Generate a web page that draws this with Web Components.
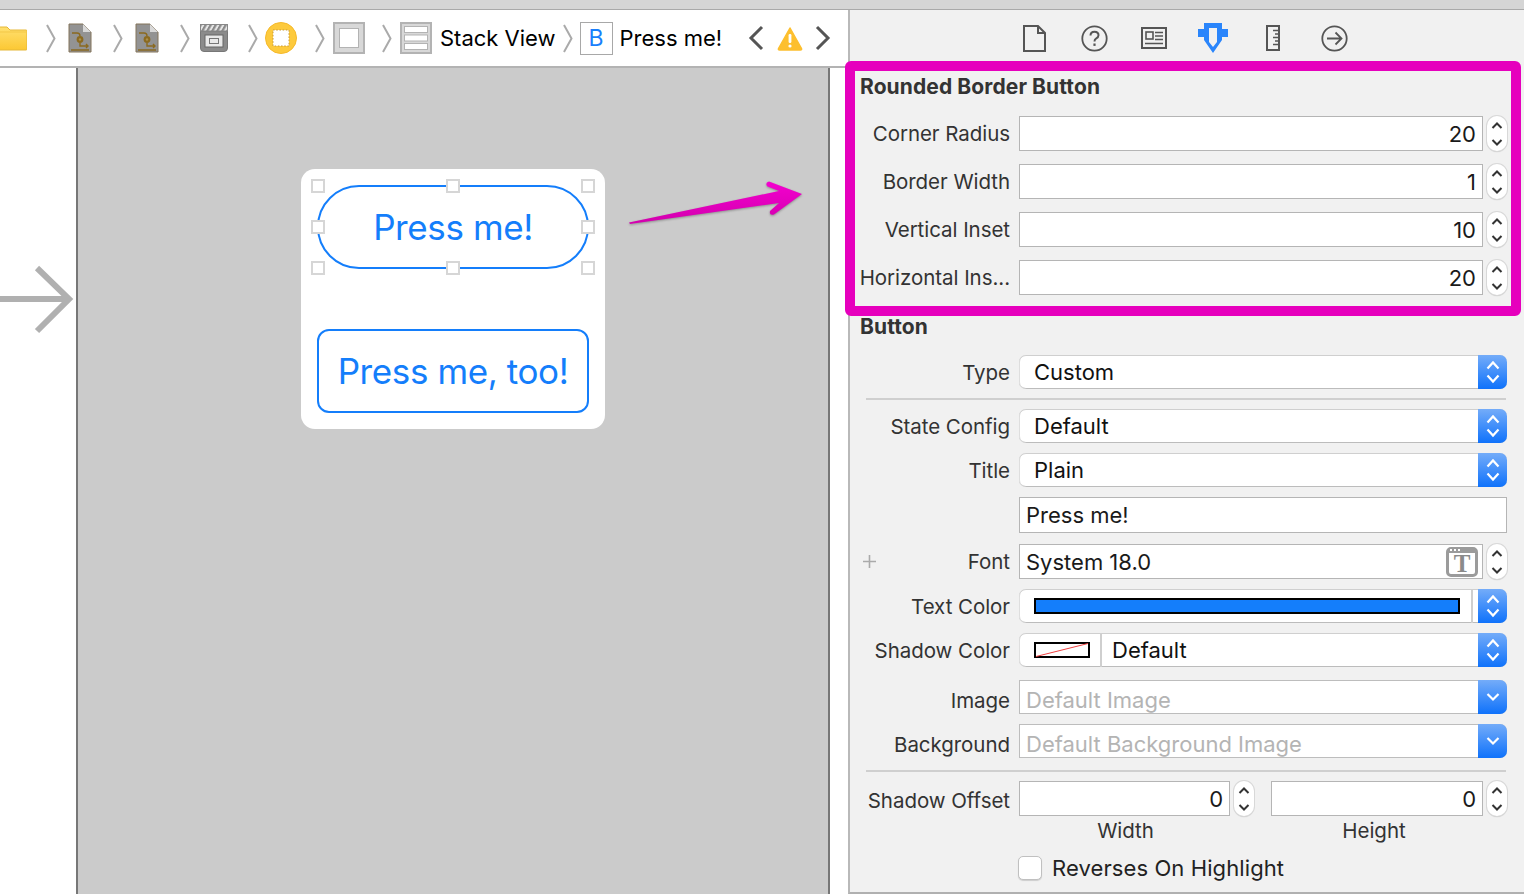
<!DOCTYPE html>
<html lang="en">
<head>
<meta charset="utf-8">
<title>Rounded Border Button</title>
<style>
    html, body { margin: 0; height: 100%; overflow: hidden; background: #f1f1f1; }
    body { font-family: Inter, "Liberation Sans", sans-serif; }
</style>
</head>
<body>
<xc-app>
    <jump-bar slot="left"></jump-bar>
    <design-canvas slot="left">
        <outlet-button radius="42" selected>Press me!</outlet-button>
        <outlet-button radius="12">Press me, too!</outlet-button>
    </design-canvas>

    <inspector-tabs slot="right"></inspector-tabs>
    <inspector-section slot="right" title="Rounded Border Button" style="--head-top:10px">
        <insp-row label="Corner Radius" style="margin-top:13px"><num-field value="20"></num-field></insp-row>
        <insp-row label="Border Width" style="margin-top:13px"><num-field value="1"></num-field></insp-row>
        <insp-row label="Vertical Inset" style="margin-top:13px"><num-field value="10"></num-field></insp-row>
        <insp-row label="Horizontal Ins..." style="margin-top:13px"><num-field value="20"></num-field></insp-row>
    </inspector-section>
    <inspector-section slot="right" title="Button" style="--head-top:16px">
        <insp-row label="Type" style="margin-top:12px"><pop-up text="Custom"></pop-up></insp-row>
        <insp-sep style="margin-top:9px"></insp-sep>
        <insp-row label="State Config" style="margin-top:9px"><pop-up text="Default"></pop-up></insp-row>
        <insp-row label="Title" style="margin-top:10px"><pop-up text="Plain"></pop-up></insp-row>
        <insp-row style="margin-top:10px"><text-field text="Press me!"></text-field></insp-row>
        <insp-row label="Font" plus style="margin-top:11px"><font-field text="System 18.0"></font-field></insp-row>
        <insp-row label="Text Color" style="margin-top:10px"><color-pop kind="wide"></color-pop></insp-row>
        <insp-row label="Shadow Color" style="margin-top:10px"><color-pop kind="clear" text="Default"></color-pop></insp-row>
        <insp-row label="Image" style="margin-top:13px;--label-lh:42px"><combo-box text="Default Image"></combo-box></insp-row>
        <insp-row label="Background" style="margin-top:10px;--label-lh:42px"><combo-box text="Default Background Image"></combo-box></insp-row>
        <insp-sep style="margin-top:12px"></insp-sep>
        <insp-row label="Shadow Offset" style="margin-top:9px;--label-lh:40px"><offset-pair></offset-pair></insp-row>
        <insp-row style="margin-top:12px"><check-box text="Reverses On Highlight"></check-box></insp-row>
    </inspector-section>

    <call-outs slot="over"></call-outs>
</xc-app>

<script>
class XcApp extends HTMLElement {
    constructor() {
        super();
        this.attachShadow({ mode: 'open' });
        this.shadowRoot.innerHTML = `
            <style>
                :host { display: flex; flex-direction: column; position: relative; width: 1524px; height: 894px; overflow: hidden; background: #f1f1f1; }
                .strip { flex: none; height: 9px; background: #d5d5d5; border-bottom: 1px solid #a9a9a9; }
                .main { flex: 1; display: flex; min-height: 0; }
                .left { flex: none; width: 848px; display: flex; flex-direction: column; background: #fff; }
                .right { flex: 1; border-left: 2px solid #b9b9b9; border-bottom: 2px solid #b0b0b0; background: #f1f1f1; min-width: 0; }
            </style>
            <div class="strip"></div>
            <div class="main">
                <div class="left"><slot name="left"></slot></div>
                <div class="right"><slot name="right"></slot></div>
            </div>
            <slot name="over"></slot>
        `;
    }
}

class JumpBar extends HTMLElement {
    constructor() {
        super();
        this.attachShadow({ mode: 'open' });
        const sep = ml => `<svg class="sep" style="margin-left:${ml}px" width="10" height="29" viewBox="0 0 10 29"><path d="M1 1 L8.5 14.5 L1 28" fill="none" stroke="#aaa" stroke-width="2"/></svg>`;
        const doc = ml => `<svg style="margin-left:${ml}px" width="24" height="30" viewBox="0 0 24 30">
            <path d="M1 1 H15 L23 9 V29 H1 Z" fill="#939393" stroke="#84745a" stroke-width="1"/>
            <path d="M15 1 V9 H23 Z" fill="#d8d8d8"/>
            <path d="M4 10 H9 Q12 10 12 13" fill="none" stroke="#8b6a20" stroke-width="1.4"/>
            <circle cx="12" cy="16.5" r="3.4" fill="#8b6a20"/><circle cx="12" cy="16.5" r="1.2" fill="#a98f4e"/>
            <path d="M12 20 V23 H20 M18 21 L20 23 L18 25 M3 27 H21" fill="none" stroke="#8b6a20" stroke-width="1.4"/>
        </svg>`;
        this.shadowRoot.innerHTML = `
            <style>
                :host { flex: none; display: flex; align-items: center; height: 56px; box-sizing: content-box; background: #fff; border-bottom: 2px solid #b3b3b3; font: 22px Inter, "Liberation Sans", sans-serif; color: #000; overflow: hidden; }
                svg { flex: none; display: block; }
                .txt { flex: none; white-space: nowrap; }
                .b { flex: none; box-sizing: border-box; width: 33px; height: 33px; margin-left: 7px; border: 1px solid #a8a8a8; display: flex; align-items: center; justify-content: center; color: #1a7ffb; font-size: 23px; }
            </style>
            <svg style="margin-left:-1px" width="28" height="25" viewBox="0 0 28 25">
                <defs><linearGradient id="fo" x1="0" y1="0" x2="0" y2="1"><stop offset="0" stop-color="#ffe070"/><stop offset="1" stop-color="#fcc833"/></linearGradient></defs>
                <path d="M0 1 H8 L11 4 H27 Q28 4 28 5 V23 Q28 24 27 24 H0 Z" fill="url(#fo)" stroke="#e6b838" stroke-width="1"/>
                <path d="M0 6 H28" stroke="#f3c746" stroke-width="1"/>
            </svg>
            ${sep(19)}${doc(12)}${sep(21)}${doc(12)}${sep(21)}
            <svg style="margin-left:10px" width="28" height="28" viewBox="0 0 28 28">
                <defs><pattern id="ha" width="5" height="7" patternUnits="userSpaceOnUse" patternTransform="skewX(-30)"><rect width="5" height="7" fill="#e6e6e6"/><rect width="2.6" height="7" fill="#8a8a8a"/></pattern></defs>
                <path d="M0.5 7 H27.5 V24 Q27.5 27.5 24 27.5 H4 Q0.5 27.5 0.5 24 Z" fill="#8b8b8b" stroke="#777"/>
                <rect x="0.5" y="0.5" width="27" height="6.5" fill="url(#ha)" stroke="#888"/>
                <rect x="5" y="11" width="18" height="12" fill="#e9e9e9" stroke="#666"/>
                <rect x="9.5" y="14.5" width="9" height="5" fill="#e9e9e9" stroke="#777"/>
            </svg>
            ${sep(20)}
            <svg style="margin-left:7px" width="32" height="32" viewBox="0 0 32 32">
                <circle cx="16" cy="16" r="15.5" fill="#fdca3d" stroke="#f5b92c"/>
                <rect x="8" y="8" width="16" height="16" fill="#fff" stroke="#c99a34" stroke-dasharray="1.6 1.6"/>
            </svg>
            ${sep(18)}
            <svg style="margin-left:8px" width="32" height="32" viewBox="0 0 32 32">
                <rect x="1" y="1" width="30" height="30" fill="#d8d8d8" stroke="#b3b3b3" stroke-width="2"/>
                <rect x="6.5" y="6.5" width="19" height="19" fill="#fff" stroke="#b3b3b3"/>
            </svg>
            ${sep(17)}
            <svg style="margin-left:8px" width="32" height="32" viewBox="0 0 32 32">
                <rect x="1" y="1" width="30" height="30" fill="#d8d8d8" stroke="#b3b3b3" stroke-width="2"/>
                <rect x="4.5" y="4.5" width="23" height="6" fill="#fff" stroke="#b3b3b3"/>
                <rect x="4.5" y="13" width="23" height="6" fill="#fff" stroke="#b3b3b3"/>
                <rect x="4.5" y="21.5" width="23" height="6" fill="#fff" stroke="#b3b3b3"/>
            </svg>
            <span class="txt" style="margin-left:8px">Stack View</span>
            ${sep(7)}
            <span class="b">B</span>
            <span class="txt" style="margin-left:7px">Press me!</span>
            <svg style="margin-left:26px" width="16" height="26" viewBox="0 0 16 26"><path d="M14 2 L3 13 L14 24" fill="none" stroke="#555" stroke-width="3"/></svg>
            <svg style="margin-left:13px" width="26" height="25" viewBox="0 0 26 25">
                <path d="M13 2 L24.5 22.5 Q25 24 23.5 24 H2.5 Q1 24 1.5 22.5 Z" fill="#fdbf2e" stroke="#fdbf2e" stroke-width="1.5" stroke-linejoin="round"/>
                <rect x="11.6" y="8" width="2.8" height="9" rx="1.2" fill="#fff"/><circle cx="13" cy="20" r="1.6" fill="#fff"/>
            </svg>
            <svg style="margin-left:12px" width="16" height="26" viewBox="0 0 16 26"><path d="M2 2 L13 13 L2 24" fill="none" stroke="#555" stroke-width="3"/></svg>
        `;
    }
}

class DesignCanvas extends HTMLElement {
    constructor() {
        super();
        this.attachShadow({ mode: 'open' });
        this.shadowRoot.innerHTML = `
            <style>
                :host { flex: 1; display: flex; min-height: 0; background: #fff; }
                .gutter { flex: none; width: 76px; display: flex; align-items: flex-start; padding-top: 197px; box-sizing: border-box; }
                .board { flex: none; box-sizing: border-box; width: 754px; border-left: 2px solid #777; border-right: 2px solid #777; background: #cbcbcb; display: flex; justify-content: center; align-items: flex-start; padding-top: 101px; }
                .scene { width: 304px; height: 260px; box-sizing: border-box; padding: 16px; background: #fff; border-radius: 14px; display: flex; flex-direction: column; justify-content: space-between; }
            </style>
            <div class="gutter">
                <svg width="76" height="72" viewBox="0 0 76 72"><path d="M0 34 H68 M37 3 L69 34 L37 66" fill="none" stroke="#b0b0b0" stroke-width="6"/></svg>
            </div>
            <div class="board"><div class="scene"><slot></slot></div></div>
        `;
    }
}

class OutletButton extends HTMLElement {
    constructor() {
        super();
        this.attachShadow({ mode: 'open' });
        const spots = [[0,0],[50,0],[100,0],[0,50],[100,50],[0,100],[50,100],[100,100]];
        const filled = i => (i === 1 || i === 3 || i === 4 || i === 6) ? ' on' : '';
        const handles = this.hasAttribute('selected')
            ? '<div class="hs">' + spots.map((p, i) => `<i class="h${filled(i)}" style="left:${p[0]}%;top:${p[1]}%"></i>`).join('') + '</div>' : '';
        this.shadowRoot.innerHTML = `
            <style>
                :host { display: flex; position: relative; height: 84px; box-sizing: border-box; border: 2px solid #147efb; border-radius: ${this.getAttribute('radius')}px; align-items: center; justify-content: center; color: #147efb; font: 35px Inter, "Liberation Sans", sans-serif; letter-spacing: -0.4px; }
                .hs { position: absolute; inset: -1px; }
                .h { position: absolute; width: 14px; height: 14px; box-sizing: border-box; margin: -7px 0 0 -7px; border: 2px solid #d6d6d6; background: transparent; }
                .h.on { background: #fff; }
            </style>
            <slot></slot>${handles}
        `;
    }
}

class InspectorTabs extends HTMLElement {
    constructor() {
        super();
        this.attachShadow({ mode: 'open' });
        this.shadowRoot.innerHTML = `
            <style>
                :host { display: flex; align-items: center; height: 51px; padding-left: 173px; padding-top: 5px; box-sizing: border-box; }
                svg { flex: none; display: block; }
            </style>
            <svg style="margin-left:0" width="23" height="27" viewBox="0 0 23 27"><path d="M1 1 H15 L22 8 V26 H1 Z M15 1 V8 H22" fill="none" stroke="#555" stroke-width="2"/></svg>
            <svg style="margin-left:35px" width="27" height="27" viewBox="0 0 27 27"><circle cx="13.5" cy="13.5" r="12.2" fill="none" stroke="#555" stroke-width="1.8"/><path d="M9.5 10.5 Q9.5 6.8 13.5 6.8 Q17.5 6.8 17.5 10.3 Q17.5 12.4 15 13.6 Q13.5 14.4 13.5 16.5" fill="none" stroke="#555" stroke-width="2"/><rect x="12.4" y="18.5" width="2.2" height="2.4" fill="#555"/></svg>
            <svg style="margin-left:33px" width="26" height="22" viewBox="0 0 26 22"><rect x="1" y="1" width="24" height="20" fill="none" stroke="#555" stroke-width="2"/><rect x="5" y="5" width="7" height="7" fill="none" stroke="#555" stroke-width="1.6"/><path d="M14 5.5 H22 M14 9 H22 M14 12.5 H22 M4 16.5 H22" stroke="#555" stroke-width="1.6"/></svg>
            <svg style="margin-left:31px" width="30" height="30" viewBox="0 0 30 30"><path d="M6 0 H24 V6 H30 V14 H24 V17 L15 30 L6 17 V14 H0 V6 H6 Z M11 5 V19 L15 24 L19 19 V5 Z" fill="#2a85fb" fill-rule="evenodd"/></svg>
            <svg style="margin-left:38px" width="14" height="26" viewBox="0 0 14 26"><path d="M1 1 H13 V25 H1 Z" fill="none" stroke="#555" stroke-width="2"/><path d="M7 5.5 H13 M9 9 H13 M7 12.5 H13 M9 16 H13 M7 19.5 H13" stroke="#555" stroke-width="1.6"/></svg>
            <svg style="margin-left:41px" width="27" height="27" viewBox="0 0 27 27"><circle cx="13.5" cy="13.5" r="12.2" fill="none" stroke="#555" stroke-width="1.8"/><path d="M6 13.5 H20 M14.5 7.5 L20.5 13.5 L14.5 19.5" fill="none" stroke="#555" stroke-width="1.8"/></svg>
        `;
    }
}

class InspectorSection extends HTMLElement {
    constructor() {
        super();
        this.attachShadow({ mode: 'open' });
        this.shadowRoot.innerHTML = `
            <style>
                :host { display: block; }
                h2 { margin: var(--head-top) 0 0 10px; height: 32px; font: 700 21px/32px Inter, "Liberation Sans", sans-serif; letter-spacing: 0.1px; color: #333; }
            </style>
            <h2></h2>
            <slot></slot>
        `;
    }

    connectedCallback() {
        this.shadowRoot.querySelector('h2').innerText = this.getAttribute('title');
    }
}

class InspRow extends HTMLElement {
    constructor() {
        super();
        this.attachShadow({ mode: 'open' });
        this.shadowRoot.innerHTML = `
            <style>
                :host { display: flex; align-items: flex-start; position: relative; padding-right: 17px; }
                .label { flex: none; box-sizing: border-box; width: 160px; height: 24px; text-align: right; white-space: nowrap; font: 20.5px/var(--label-lh, 36px) Inter, "Liberation Sans", sans-serif; letter-spacing: -0.05px; color: #333; }
                .ctl { flex: 1; min-width: 0; margin-left: 9px; }
                .plus { position: absolute; left: 12px; top: 10px; width: 15px; height: 15px; }
            </style>
            <span class="label"></span>
            <div class="ctl"><slot></slot></div>
        `;
    }

    connectedCallback() {
        this.shadowRoot.querySelector('.label').innerText = this.getAttribute('label') || '';
        if (this.hasAttribute('plus')) {
            this.shadowRoot.querySelector('.label').insertAdjacentHTML('beforebegin',
                '<svg class="plus" viewBox="0 0 15 15"><path d="M7.5 1 V14 M1 7.5 H14" stroke="#aaa" stroke-width="1.6"/></svg>');
        }
    }
}

class InspSep extends HTMLElement {
    constructor() {
        super();
        this.attachShadow({ mode: 'open' });
        this.shadowRoot.innerHTML = `
            <style>:host { display: block; height: 2px; background: #cfcfcf; margin-left: 16px; margin-right: 18px; }</style>
        `;
    }
}

const stepperSvg = `<svg width="12" height="28" viewBox="0 0 12 28"><path d="M1.5 8 L6 3.5 L10.5 8 M1.5 20 L6 24.5 L10.5 20" fill="none" stroke="#333" stroke-width="2"/></svg>`;
const fieldCss = `
    :host { display: flex; }
    .f { flex: 1; min-width: 0; box-sizing: border-box; height: 35px; background: #fff; border: 1px solid #b5b5b5; display: flex; align-items: center; font: 22px Inter, "Liberation Sans", sans-serif; color: #1a1a1a; padding: 0 6px 0 6px; white-space: nowrap; overflow: hidden; }
    .st { flex: none; width: 20px; height: 35px; margin-left: 4px; box-sizing: border-box; background: #fff; border-radius: 10px; box-shadow: 0 0 0 1px #d8d8d8, 0 1px 1px rgba(0,0,0,.28); display: flex; align-items: center; justify-content: center; }
`;

class NumField extends HTMLElement {
    constructor() {
        super();
        this.attachShadow({ mode: 'open' });
        this.shadowRoot.innerHTML = `
            <style>${fieldCss} .f { justify-content: flex-end; }</style>
            <div class="f"><span class="v"></span></div>
            <div class="st">${stepperSvg}</div>
        `;
    }

    connectedCallback() {
        this.shadowRoot.querySelector('.v').innerText = this.getAttribute('value');
    }
}

const popCss = `
    :host { display: block; }
    .p { display: flex; height: 34px; border-radius: 7px; background: #fff; overflow: hidden; box-shadow: inset 0 1px 0 #cfcfcf, inset 1px 0 0 #dedede, inset 0 -1px 0 #bcbcbc; font: 22px Inter, "Liberation Sans", sans-serif; color: #111; }
    .body { flex: 1; min-width: 0; display: flex; align-items: center; white-space: nowrap; }
    .end { flex: none; width: 29px; background: linear-gradient(#74acf9, #0f72fb); display: flex; align-items: center; justify-content: center; }
`;
const upDown = `<svg width="14" height="26" viewBox="0 0 14 26"><path d="M1.5 9.5 L7 3.5 L12.5 9.5 M1.5 16.5 L7 22.5 L12.5 16.5" fill="none" stroke="#fff" stroke-width="2.2"/></svg>`;

class PopUp extends HTMLElement {
    constructor() {
        super();
        this.attachShadow({ mode: 'open' });
        this.shadowRoot.innerHTML = `
            <style>${popCss} .body { padding-left: 15px; }</style>
            <div class="p"><div class="body"></div><div class="end">${upDown}</div></div>
        `;
    }

    connectedCallback() {
        this.shadowRoot.querySelector('.body').innerText = this.getAttribute('text');
    }
}

class ColorPop extends HTMLElement {
    constructor() {
        super();
        this.attachShadow({ mode: 'open' });
        this.shadowRoot.innerHTML = `
            <style>${popCss}
                .body { padding-left: 15px; }
                .wide { flex: none; box-sizing: border-box; width: 426px; height: 16px; background: #147efb; border: 2px solid #000; }
                .bar { flex: none; width: 2px; align-self: stretch; background: #cfcfcf; margin-left: 11px; }
                .clear { flex: none; width: 56px; height: 16px; display: block; }
                .name { margin-left: 10px; }
                .clear + .bar { margin-left: 10px; }
            </style>
            <div class="p"><div class="body"></div><div class="end">${upDown}</div></div>
        `;
    }

    connectedCallback() {
        const body = this.shadowRoot.querySelector('.body');
        if (this.getAttribute('kind') === 'wide') {
            body.innerHTML = '<span class="wide"></span><span class="bar"></span>';
        } else {
            body.innerHTML = `<svg class="clear" viewBox="0 0 56 16"><rect x="1" y="1" width="54" height="14" fill="#fff" stroke="#000" stroke-width="2"/><path d="M2 14.5 L54 1.5" stroke="#f04040" stroke-width="1"/></svg><span class="bar"></span><span class="name"></span>`;
            body.querySelector('.name').innerText = this.getAttribute('text');
        }
    }
}

class TextField extends HTMLElement {
    constructor() {
        super();
        this.attachShadow({ mode: 'open' });
        this.shadowRoot.innerHTML = `
            <style>${fieldCss} .f { height: 36px; }</style>
            <div class="f"></div>
        `;
    }

    connectedCallback() {
        this.shadowRoot.querySelector('.f').innerText = this.getAttribute('text');
    }
}

class FontField extends HTMLElement {
    constructor() {
        super();
        this.attachShadow({ mode: 'open' });
        this.shadowRoot.innerHTML = `
            <style>${fieldCss}
                .f { justify-content: space-between; padding-right: 4px; }
                .t { flex: none; position: relative; box-sizing: border-box; width: 32px; height: 30px; border: 3px solid #9b9b9b; border-top-width: 6px; border-radius: 5px; background: #fff; display: flex; align-items: center; justify-content: center; font: 700 25px/1 "Liberation Serif", serif; color: #8a8a8a; }
                .t::before { content: ""; position: absolute; left: 1px; top: -4px; width: 2px; height: 2px; background: #fff; box-shadow: 4px 0 #fff, 8px 0 #fff; }
            </style>
            <div class="f"><span class="v"></span><span class="t">T</span></div>
            <div class="st">${stepperSvg}</div>
        `;
    }

    connectedCallback() {
        this.shadowRoot.querySelector('.v').innerText = this.getAttribute('text');
    }
}

class ComboBox extends HTMLElement {
    constructor() {
        super();
        this.attachShadow({ mode: 'open' });
        this.shadowRoot.innerHTML = `
            <style>${popCss}
                .p { border-radius: 0 7px 7px 0; box-shadow: inset 0 0 0 1px #bdbdbd; }
                .body { padding: 6px 0 0 7px; color: #b4b4b4; }
            </style>
            <div class="p"><div class="body"></div><div class="end"><svg width="14" height="10" viewBox="0 0 14 10"><path d="M1.5 2 L7 7.5 L12.5 2" fill="none" stroke="#fff" stroke-width="2.2"/></svg></div></div>
        `;
    }

    connectedCallback() {
        this.shadowRoot.querySelector('.body').innerText = this.getAttribute('text');
    }
}

class OffsetPair extends HTMLElement {
    constructor() {
        super();
        this.attachShadow({ mode: 'open' });
        this.shadowRoot.innerHTML = `
            <style>
                :host { display: grid; grid-template-columns: 235px 236px; column-gap: 17px; row-gap: 2px; font: 20.5px/26px Inter, "Liberation Sans", sans-serif; letter-spacing: -0.05px; color: #333; }
                .cap { width: 213px; text-align: center; }
                .cap.h { width: 206px; }
            </style>
            <num-field value="0"></num-field>
            <num-field value="0"></num-field>
            <div class="cap">Width</div>
            <div class="cap h">Height</div>
        `;
    }
}

class CheckBox extends HTMLElement {
    constructor() {
        super();
        this.attachShadow({ mode: 'open' });
        this.shadowRoot.innerHTML = `
            <style>
                :host { display: flex; align-items: center; height: 24px; margin-left: -1px; font: 22px Inter, "Liberation Sans", sans-serif; letter-spacing: 0.1px; color: #222; white-space: nowrap; }
                .box { flex: none; box-sizing: border-box; width: 24px; height: 24px; margin-right: 10px; background: #fff; border-radius: 5px; border: 1px solid #c0c0c0; box-shadow: 0 1px 1px rgba(0,0,0,.15); }
            </style>
            <span class="box"></span><span class="t"></span>
        `;
    }

    connectedCallback() {
        this.shadowRoot.querySelector('.t').innerText = this.getAttribute('text');
    }
}

// the pink frame and arrow were drawn over the screenshot, so they sit over everything
class CallOuts extends HTMLElement {
    constructor() {
        super();
        this.attachShadow({ mode: 'open' });
        this.shadowRoot.innerHTML = `
            <style>
                :host { position: absolute; inset: 0; pointer-events: none; }
                .frame { position: absolute; left: 845px; top: 61px; width: 676px; height: 255px; box-sizing: border-box; border: 10px solid #e600bd; border-radius: 6px; }
                svg { position: absolute; left: 620px; top: 170px; filter: drop-shadow(0 1px 1px rgba(0,0,0,.3)); }
            </style>
            <div class="frame"></div>
            <svg width="190" height="60" viewBox="620 170 190 60">
                <defs><linearGradient id="ar" x1="0" y1="0" x2="0" y2="1"><stop offset="0" stop-color="#f400cf"/><stop offset="1" stop-color="#d200ad"/></linearGradient></defs>
                <path d="M629 222.5 L779 191 L767.5 186.5 Q764.5 183 769 181.5 L802 194 L774 214.5 Q769 216 770 211 L779 203 L630 224 Z" fill="url(#ar)"/>
            </svg>
        `;
    }
}

customElements.define('xc-app', XcApp);
customElements.define('jump-bar', JumpBar);
customElements.define('design-canvas', DesignCanvas);
customElements.define('outlet-button', OutletButton);
customElements.define('inspector-tabs', InspectorTabs);
customElements.define('inspector-section', InspectorSection);
customElements.define('insp-row', InspRow);
customElements.define('insp-sep', InspSep);
customElements.define('num-field', NumField);
customElements.define('pop-up', PopUp);
customElements.define('color-pop', ColorPop);
customElements.define('text-field', TextField);
customElements.define('font-field', FontField);
customElements.define('combo-box', ComboBox);
customElements.define('offset-pair', OffsetPair);
customElements.define('check-box', CheckBox);
customElements.define('call-outs', CallOuts);
</script>
</body>
</html>
